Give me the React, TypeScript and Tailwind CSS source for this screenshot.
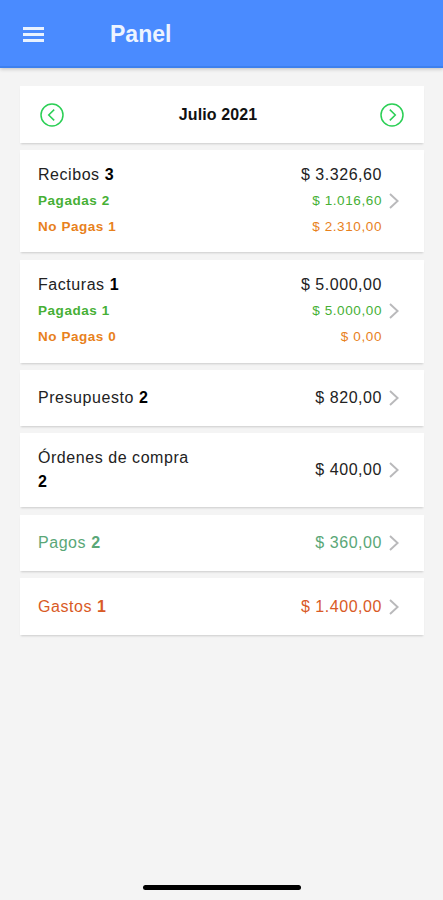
import { useState } from 'react';

interface Line {
    label: string;
    count: number;
    amount: string;
    color: string;
}

interface Summary {
    label: string;
    count: number;
    amount: string;
    color: string;
    size: string;
    details?: Line[];
}

const summaries: Summary[] = [
    {
        label: 'Recibos',
        count: 3,
        amount: '$ 3.326,60',
        color: 'text-[#222222]',
        size: 'h-[102px] mt-[7px]',
        details: [
            { label: 'Pagadas', count: 2, amount: '$ 1.016,60', color: 'text-[#46b035]' },
            { label: 'No Pagas', count: 1, amount: '$ 2.310,00', color: 'text-[#e8811c]' },
        ],
    },
    {
        label: 'Facturas',
        count: 1,
        amount: '$ 5.000,00',
        color: 'text-[#222222]',
        size: 'h-[103px] mt-2 pb-px',
        details: [
            { label: 'Pagadas', count: 1, amount: '$ 5.000,00', color: 'text-[#46b035]' },
            { label: 'No Pagas', count: 0, amount: '$ 0,00', color: 'text-[#e8811c]' },
        ],
    },
    { label: 'Presupuesto', count: 2, amount: '$ 820,00', color: 'text-[#222222]', size: 'h-14 mt-[7px]' },
    { label: 'Órdenes de compra', count: 2, amount: '$ 400,00', color: 'text-[#222222]', size: 'h-[74px] mt-[7px]' },
    { label: 'Pagos', count: 2, amount: '$ 360,00', color: 'text-[#5aa777]', size: 'h-14 mt-2' },
    { label: 'Gastos', count: 1, amount: '$ 1.400,00', color: 'text-[#d95a26]', size: 'h-[57px] mt-[7px]' },
];

const months = ['Enero', 'Febrero', 'Marzo', 'Abril', 'Mayo', 'Junio', 'Julio', 'Agosto', 'Septiembre', 'Octubre', 'Noviembre', 'Diciembre'];

function CircleArrow({ flip = false }: { flip?: boolean }) {
    return (
        <svg width="24" height="24" viewBox="0 0 24 24" fill="none" stroke="#2bcf55" strokeWidth="1.5" className={flip ? 'rotate-180' : ''}>
            <circle cx="12" cy="12" r="11" />
            <path d="M14.2 6.6 8.7 12l5.5 5.4" />
        </svg>
    );
}

function SummaryCard({ item }: { item: Summary }) {
    return (
        <div className={`flex items-center bg-white pl-[18px] pr-[25px] shadow-[0_2px_2px_-1px_rgba(0,0,0,0.17)] ${item.size} ${item.color}`}>
            <div className="w-[160px]">
                <div className="text-[16px] leading-6 tracking-[0.55px]">
                    {item.label} <b className={item.color === 'text-[#222222]' ? 'text-black' : ''}>{item.count}</b>
                </div>
                {item.details?.map((line) => (
                    <div key={line.label} className={`mt-0.5 text-[13.5px] font-bold leading-6 tracking-[0.55px] ${line.color}`}>
                        {line.label} {line.count}
                    </div>
                ))}
            </div>
            <div className="ml-auto text-right">
                <div className="text-[16px] leading-6 tracking-[0.55px]">{item.amount}</div>
                {item.details?.map((line) => (
                    <div key={line.label} className={`mt-0.5 text-[13.5px] leading-6 tracking-[0.6px] ${line.color}`}>
                        {line.amount}
                    </div>
                ))}
            </div>
            <svg width="10" height="16" viewBox="0 0 10 16" fill="none" stroke="#b9b9bb" strokeWidth="1.9" className="ml-[7px]">
                <path d="M1 1l7.6 7L1 15" />
            </svg>
        </div>
    );
}

export default function App() {
    const [month, setMonth] = useState(6);

    return (
        <div className="flex h-[900px] w-[443px] flex-col overflow-hidden bg-[#f4f4f4] font-['Liberation_Sans',Arial,sans-serif]">
            <header className="flex h-[68px] shrink-0 items-center border-b-2 border-[#3d80ee] bg-[#4a8bff] pl-[23px] pt-[2px] shadow-[0_1px_4px_rgba(0,0,0,0.22)]">
                <button aria-label="Menú" className="flex w-[21px] flex-col gap-[3px]">
                    <span className="h-[3px] w-full bg-[#e9f2ff]" />
                    <span className="h-[3px] w-full bg-[#e9f2ff]" />
                    <span className="h-[3px] w-full bg-[#e9f2ff]" />
                </button>
                <h1 className="ml-[66px] text-[23px] font-bold leading-7 text-[#edf4ff]">Panel</h1>
            </header>

            <main className="flex-1 pl-5 pr-[19px] pt-[18px]">
                <div className="flex h-[57px] items-center justify-between bg-white px-5 shadow-[0_2px_2px_-1px_rgba(0,0,0,0.17)]">
                    <button aria-label="Mes anterior" onClick={() => setMonth((month + 11) % 12)}>
                        <CircleArrow />
                    </button>
                    <span className="pr-2 text-[16px] font-bold tracking-[0.1px] text-[#111111]">{months[month]} 2021</span>
                    <button aria-label="Mes siguiente" onClick={() => setMonth((month + 1) % 12)}>
                        <CircleArrow flip />
                    </button>
                </div>

                {summaries.map((item) => (
                    <SummaryCard key={item.label} item={item} />
                ))}
            </main>

            <div className="mb-[10px] ml-[143px] h-[5px] w-[158px] rounded-full bg-black" />
        </div>
    );
}
